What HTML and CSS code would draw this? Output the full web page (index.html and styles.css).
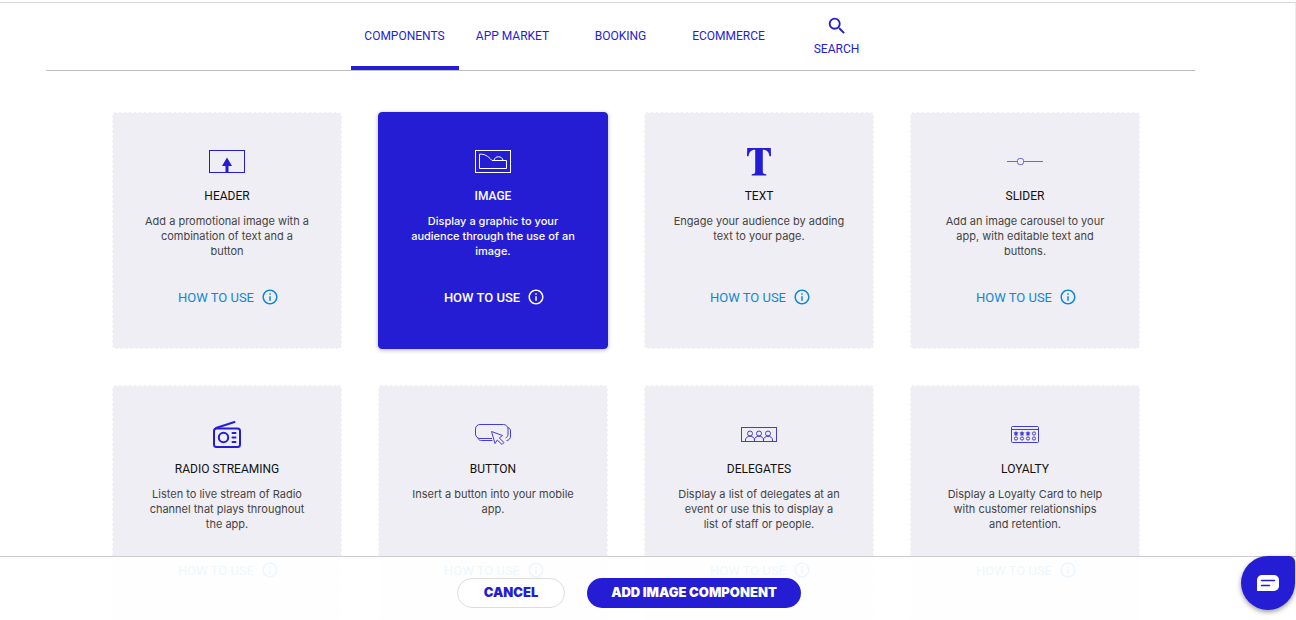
FILE: index.html
```html
<!DOCTYPE html>
<html lang="en">
<head>
<meta charset="utf-8">
<title>Add component</title>
<link rel="stylesheet" href="styles.css">
</head>
<body>
<svg class="sprite" aria-hidden="true">
  <symbol id="info" viewBox="0 0 24 24"><path d="M11 7h2v2h-2zm0 4h2v6h-2zm1-9C6.480 2 2 6.480 2 12s4.480 10 10 10 10-4.480 10-10S17.520 2 12 2zm0 18c-4.410 0-8-3.590-8-8s3.590-8 8-8 8 3.590 8 8-3.590 8-8 8z"/></symbol>
</svg>
<main class="page">
  <nav class="tabs" aria-label="Component categories">
    <button class="tab tab-active" type="button">COMPONENTS</button>
    <button class="tab" type="button">APP MARKET</button>
    <button class="tab" type="button">BOOKING</button>
    <button class="tab" type="button">ECOMMERCE</button>
    <button class="tab tab-search" type="button">
      <svg width="22" height="22" viewBox="0 0 24 24" fill="currentColor" aria-hidden="true"><path d="M15.500 14h-.79l-.28-.27A6.470 6.470 0 0 0 16 9.500 6.500 6.500 0 1 0 9.500 16c1.610 0 3.090-.59 4.230-1.570l.27.28v.79l5 4.990L20.490 19l-4.990-5zm-6 0C7.010 14 5 11.990 5 9.500S7.010 5 9.500 5 14 7.010 14 9.500 11.990 14 9.500 14z"/></svg>
      SEARCH
    </button>
  </nav>

  <section class="grid">
    <article class="card">
      <svg class="icon" viewBox="0 0 36 36" fill="none" stroke="currentColor" aria-hidden="true"><rect x=".5" y="7.500" width="35" height="22"/><path d="M18 14.500l5 8.500h-3.500v6h-3v-6H13z" fill="currentColor" stroke="none"/></svg>
      <h3>HEADER</h3>
      <p>Add a promotional image with a<br>combination of text and a<br>button</p>
      <button class="how" type="button">HOW TO USE <svg class="info" aria-hidden="true"><use href="#info"/></svg></button>
    </article>
    <article class="card card-selected">
      <svg class="icon" viewBox="0 0 36 36" fill="none" stroke="currentColor" aria-hidden="true"><rect x=".5" y="7.500" width="35" height="22"/><path d="M4.500 25.500V11.200c5-.4 8 1.500 12.500 6.300h14.500v8zM19 17.500c.5-5 8.500-5 9 0"/></svg>
      <h3>IMAGE</h3>
      <p>Display a graphic to your<br>audience through the use of an<br>image.</p>
      <button class="how" type="button">HOW TO USE <svg class="info" aria-hidden="true"><use href="#info"/></svg></button>
    </article>
    <article class="card">
      <svg class="icon" viewBox="0 0 36 36" fill="currentColor" aria-hidden="true"><path d="M6.200 5h23.600l.2 8.300h-1.500c-.6-4.300-2.500-6.500-6.500-6.500h-.2v21.700c0 2 .7 2.400 3.500 2.700V32.500H10.700v-1.300c2.800-.3 3.500-.7 3.500-2.700V6.800H14c-4 0-5.900 2.200-6.500 6.500H6z"/></svg>
      <h3>TEXT</h3>
      <p>Engage your audience by adding<br>text to your page.</p>
      <button class="how" type="button">HOW TO USE <svg class="info" aria-hidden="true"><use href="#info"/></svg></button>
    </article>
    <article class="card">
      <svg class="icon icon-light" viewBox="0 0 36 36" fill="none" stroke="currentColor" aria-hidden="true"><path d="M0 18.500h10M17 18.500h19"/><rect x="10.500" y="15.500" width="6" height="6" rx="2"/></svg>
      <h3>SLIDER</h3>
      <p>Add an image carousel to your<br>app, with editable text and<br>buttons.</p>
      <button class="how" type="button">HOW TO USE <svg class="info" aria-hidden="true"><use href="#info"/></svg></button>
    </article>
    <article class="card">
      <svg class="icon" viewBox="0 0 36 36" fill="none" stroke="currentColor" stroke-width="2" stroke-linecap="round" aria-hidden="true"><rect x="5" y="12.500" width="26" height="18.500" rx="2.500"/><path d="M7 12l18.500-6"/><circle cx="14.500" cy="21.500" r="4.700"/><path d="M23.500 17h3M23.500 21.500h3M23.500 26h3"/></svg>
      <h3>RADIO STREAMING</h3>
      <p>Listen to live stream of Radio<br>channel that plays throughout<br>the app.</p>
      <button class="how" type="button">HOW TO USE <svg class="info" aria-hidden="true"><use href="#info"/></svg></button>
    </article>
    <article class="card">
      <svg class="icon icon-soft" viewBox="0 0 36 36" fill="none" stroke="currentColor" aria-hidden="true"><path d="M17 22.500H5a4.500 4.500 0 0 1-4.500-4.500v-5A4.500 4.500 0 0 1 5 8.500h23.500A4.500 4.500 0 0 1 33 13v5c0 1.800-.8 3.300-2.300 4M3 22.500c.8 1.500 1.800 2 3.500 2h11M33 11.500c2 .8 2.500 2 2.500 3.500v5c0 2.500-1.500 4.500-4 4.500M16.500 15.500l3.500 12 2.300-3.500 4.700 4.500 2-2-4.700-4.500 3.200-2.500z"/></svg>
      <h3>BUTTON</h3>
      <p>Insert a button into your mobile<br>app.</p>
      <button class="how" type="button">HOW TO USE <svg class="info" aria-hidden="true"><use href="#info"/></svg></button>
    </article>
    <article class="card">
      <svg class="icon icon-soft" viewBox="0 0 36 36" fill="none" stroke="currentColor" aria-hidden="true"><rect x=".5" y="11.500" width="35" height="14"/><circle cx="9" cy="17.500" r="2.500"/><circle cx="18" cy="17.500" r="2.500"/><circle cx="27" cy="17.500" r="2.500"/><path d="M4.500 25.500v-1.500c0-5 9-5 9 0v1.500v-1.500c0-5 9-5 9 0v1.500v-1.500c0-5 9-5 9 0v1.500"/></svg>
      <h3>DELEGATES</h3>
      <p>Display a list of delegates at an<br>event or use this to display a<br>list of staff or people.</p>
      <button class="how" type="button">HOW TO USE <svg class="info" aria-hidden="true"><use href="#info"/></svg></button>
    </article>
    <article class="card">
      <svg class="icon icon-soft" viewBox="0 0 36 36" fill="none" stroke="currentColor" aria-hidden="true"><rect x="4.500" y="10.500" width="27" height="16" rx="1"/><path d="M4.500 13.500h27"/><g fill="currentColor" stroke="none"><path id="star" d="M9 15l.8 1.300 1.700.2-1.100 1.300.3 1.700H7.300l.3-1.700-1.100-1.300 1.700-.2z"/><use href="#star" x="6"/><use href="#star" x="12"/></g><circle cx="27" cy="17.500" r="1.600"/><circle cx="9" cy="22.500" r="1.600"/><circle cx="15" cy="22.500" r="1.600"/><circle cx="21" cy="22.500" r="1.600"/><circle cx="27" cy="22.500" r="1.600"/></svg>
      <h3>LOYALTY</h3>
      <p>Display a Loyalty Card to help<br>with customer relationships<br>and retention.</p>
      <button class="how" type="button">HOW TO USE <svg class="info" aria-hidden="true"><use href="#info"/></svg></button>
    </article>
  </section>
</main>

<footer class="actions">
  <button class="btn btn-cancel" type="button">CANCEL</button>
  <button class="btn btn-add" type="button">ADD IMAGE COMPONENT</button>
</footer>
<button class="chat" type="button" aria-label="Open chat">
  <svg width="22" height="16" viewBox="0 0 22 16" aria-hidden="true"><path d="M5 0h12a5 5 0 0 1 5 5v6a5 5 0 0 1-5 5H0V5a5 5 0 0 1 5-5z" fill="#fff"/><path d="M4.500 5.500h13M4.500 10.500h8" stroke="#251dd4" stroke-width="1.500" stroke-linecap="round"/></svg>
</button>
</body>
</html>
```
FILE: styles.css
```css
:root {
  --brand: #251dd4;
  --link: #0f87d6;
}

* {
  box-sizing: border-box;
}

body {
  display: flex;
  flex-direction: column;
  margin: 0;
  padding-top: 2px;
  height: 100vh;
  background: #fff;
  font-family: Roboto, "Liberation Sans", sans-serif;
}

button {
  border: 0;
  background: none;
  padding: 0;
  font: inherit;
  color: inherit;
  cursor: pointer;
}

.sprite {
  position: absolute;
  width: 0;
  height: 0;
}

.page {
  flex: 1;
  min-height: 0;
  overflow-y: auto;
  scrollbar-width: none;
  border-top: 1px solid #dadada;
  border-right: 1px solid #ececf0;
  padding: 0 100px 0 46px;
}

.tabs {
  display: flex;
  justify-content: center;
  height: 68px;
  border-bottom: 1px solid #c0c0c0;
  color: var(--brand);
}

.tab {
  width: 108px;
  padding-top: 2px;
  border-bottom: 4px solid transparent;
  font-size: 12px;
}

.tab-active {
  border-bottom-color: var(--brand);
}

.tab-search {
  display: flex;
  flex-direction: column;
  align-items: center;
  justify-content: center;
  gap: 5px;
}

.grid {
  display: grid;
  grid-template-columns: repeat(4, 1fr);
  gap: 36px;
  padding: 41px 55px 64px 66px;
}

.card {
  display: flex;
  flex-direction: column;
  align-items: center;
  height: 237px;
  padding: 30px 24px 0;
  border: 1px dashed #fff;
  border-radius: 4px;
  background: #efeef4;
  color: #444;
  text-align: center;
}

.card h3 {
  margin: 9px 0 10px;
  font-size: 12px;
  line-height: 16px;
  font-weight: 400;
  color: #111;
}

.card p {
  margin: 0;
  height: 71px;
  font-family: Inter, sans-serif;
  font-size: 11px;
  line-height: 15px;
}

.card-selected {
  border: 1px solid var(--brand);
  background: var(--brand);
  box-shadow: 0 1px 4px rgba(0, 0, 0, 0.3);
  color: #fff;
}

.card-selected h3,
.card-selected p {
  color: #fff;
  font-weight: 500;
}

.icon {
  flex: none;
  width: 36px;
  height: 36px;
  color: var(--brand);
}

.card-selected .icon {
  color: #fff;
}

.icon-soft {
  opacity: 0.85;
}

.icon-light {
  opacity: 0.65;
}

.how {
  display: flex;
  align-items: center;
  gap: 7px;
  height: 24px;
  padding-left: 3px;
  font-size: 13px;
  color: var(--link);
}

.card-selected .how {
  color: #fff;
  font-weight: 500;
}

.info {
  width: 18px;
  height: 18px;
  fill: currentColor;
}

.actions {
  position: fixed;
  inset: auto 0 0 0;
  display: flex;
  justify-content: center;
  align-items: center;
  gap: 22px;
  height: 64px;
  padding: 8px 38px 0 0;
  border-top: 1px solid #ccc;
  background: rgba(255, 255, 255, 0.92);
}

.btn {
  height: 30px;
  padding-bottom: 2px;
  border-radius: 16px;
  font-family: Inter, sans-serif;
  font-size: 13px;
  font-weight: 900;
}

.btn-cancel {
  width: 108px;
  border: 1px solid #ddd;
  background: #fff;
  color: var(--brand);
}

.btn-add {
  width: 214px;
  background: var(--brand);
  color: #fff;
}

.chat {
  position: fixed;
  right: 1px;
  bottom: 10px;
  display: grid;
  place-items: center;
  width: 54px;
  height: 54px;
  border-radius: 27px 6px 27px 27px;
  background: var(--brand);
  box-shadow: 0 2px 5px rgba(0, 0, 0, 0.4);
}
```
